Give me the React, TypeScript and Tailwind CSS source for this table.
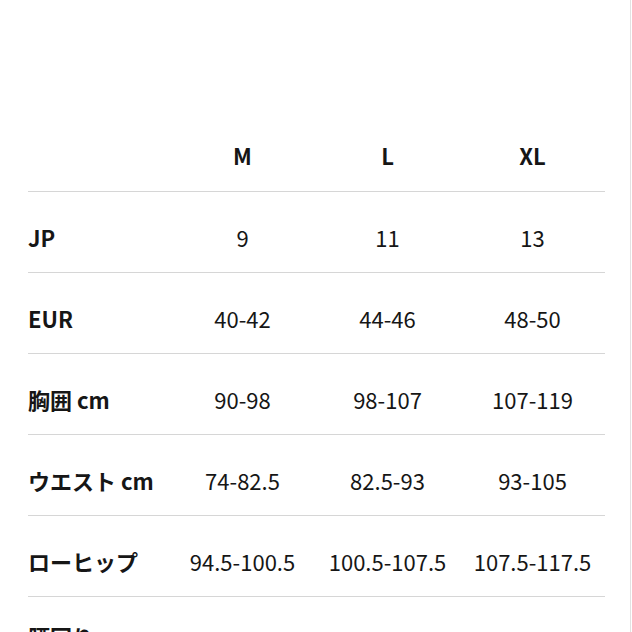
const SIZES = ["M", "L", "XL"];

const ROWS: { label: string; values: string[]; tight?: boolean }[] = [
  { label: "JP", values: ["9", "11", "13"] },
  { label: "EUR", values: ["40-42", "44-46", "48-50"] },
  { label: "胸囲 cm", values: ["90-98", "98-107", "107-119"] },
  { label: "ウエスト cm", values: ["74-82.5", "82.5-93", "93-105"] },
  { label: "ローヒップ", values: ["94.5-100.5", "100.5-107.5", "107.5-117.5"] },
  { label: "腰回り", values: ["", "", ""], tight: true },
];

export default function App() {
  return (
    <div
      className="w-[632px] h-[632px] overflow-hidden bg-white text-[#161616]"
      style={{ fontFamily: '"Noto Sans CJK JP", "Noto Sans", sans-serif' }}
    >
      <div className="w-[631px] h-full border-r border-[#e2e2e2] px-[28px]">
        <div className="w-[577px]">
          {/* header */}
          <div className="grid grid-cols-[142px_145px_145px_145px] pt-[141px] pb-[22px]">
            <div />
            {SIZES.map((s) => (
              <div key={s} className="text-center text-[22px] leading-[28px] font-bold">
                {s}
              </div>
            ))}
          </div>

          {/* rows */}
          {ROWS.map((row) => (
            <div
              key={row.label}
              className={`grid grid-cols-[142px_145px_145px_145px] border-t border-[#d6d6d6] ${
                row.tight ? "pt-[25px]" : "pt-[31px]"
              } pb-[21px]`}
            >
              <div className="text-[22px] leading-[28px] font-bold whitespace-nowrap">{row.label}</div>
              {row.values.map((v, i) => (
                <div key={i} className="text-center text-[22px] leading-[28px] whitespace-nowrap">
                  {v}
                </div>
              ))}
            </div>
          ))}
        </div>
      </div>
    </div>
  );
}
